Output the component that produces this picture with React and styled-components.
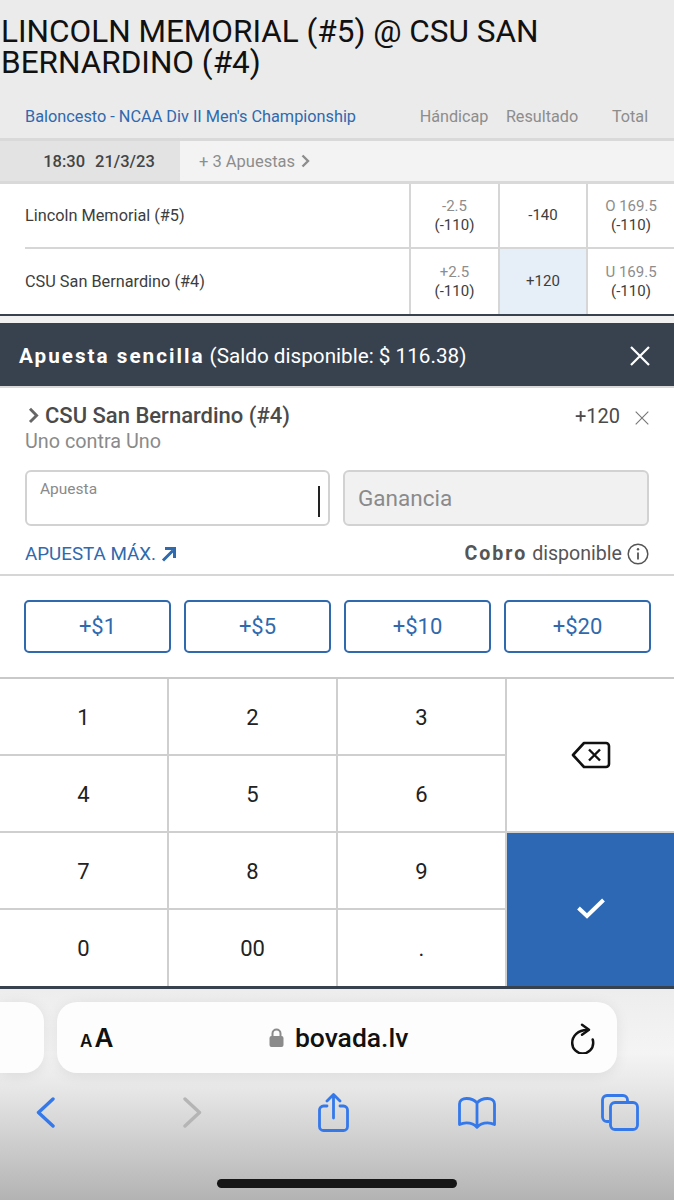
import React from "react";
import styled, { createGlobalStyle } from "styled-components";

const GlobalStyle = createGlobalStyle`
  html, body {
    margin: 0;
    padding: 0;
    background: #ebebeb;
  }
  * { box-sizing: border-box; }
`;

const Page = styled.div`
  width: 674px;
  height: 1200px;
  overflow: hidden;
  display: flex;
  flex-direction: column;
  font-family: Roboto, "Liberation Sans", sans-serif;
  background: #ebebeb;
`;

const GameHeader = styled.header`
  height: 138px;
  padding-top: 16px;
  display: flex;
  flex-direction: column;
  background: #ebebeb;
`;

const Title = styled.h1`
  margin: 0;
  padding-left: 1px;
  width: 600px;
  font-size: 31.5px;
  line-height: 31px;
  font-weight: 400;
  color: #111;
`;

const ColumnRow = styled.div`
  margin-top: 26px;
  height: 24px;
  display: grid;
  grid-template-columns: 410px 88px 88px 88px;
  align-items: center;
`;

const League = styled.span`
  padding-left: 25px;
  font-size: 16.3px;
  color: #2f69ae;
`;

const ColumnLabel = styled.span`
  text-align: center;
  font-size: 16.2px;
  color: #8d8d8d;
`;

const TimeRow = styled.div`
  height: 46px;
  display: flex;
  background: #f3f3f3;
  border-top: 3px solid #d9d9d9;
  border-bottom: 3px solid #d9d9d9;
`;

const TimeCell = styled.div`
  width: 180px;
  background: #e3e3e3;
  display: flex;
  align-items: center;
  justify-content: center;
  padding-left: 18px;
  gap: 10px;
  font-size: 16.5px;
  font-weight: 500;
  color: #444;
`;

const MoreBets = styled.div`
  padding-left: 19px;
  display: flex;
  align-items: center;
  gap: 5px;
  font-size: 16.5px;
  color: #8d8d8d;
`;

const Market = styled.div`
  background: #fff;
  border-bottom: 2px solid #38424f;
`;

const MarketRow = styled.div`
  height: 65px;
  display: grid;
  grid-template-columns: 409px 89px 88px 88px;
`;

const TeamName = styled.div`
  margin-left: 25px;
  display: flex;
  align-items: center;
  font-size: 16.3px;
  color: #3d3d3d;
  border-bottom: ${(p) => (p.$divider ? "2px solid #d6d6d6" : "none")};
`;

const OddsCell = styled.div`
  display: flex;
  flex-direction: column;
  align-items: center;
  justify-content: center;
  border-left: 2px solid #d6d6d6;
  border-bottom: ${(p) => (p.$divider ? "2px solid #d6d6d6" : "none")};
  background: ${(p) => (p.$selected ? "#e6eef7" : "#fff")};
  font-size: 15px;
  line-height: 19px;
  color: #3d3d3d;
`;

const OddsLabel = styled.span`
  color: #8d8d8d;
`;

const Gap = styled.div`
  height: 7px;
  background: #f1f1f1;
`;

const SheetBar = styled.div`
  height: 65px;
  padding: 3px 24px 0 19px;
  display: flex;
  align-items: center;
  justify-content: space-between;
  background: #38424f;
  border-bottom: 2px solid #d9d9d9;
  color: #fff;
  font-size: 20.7px;
`;

const SheetTitle = styled.strong`
  font-weight: 700;
  letter-spacing: 2px;
`;

const Slip = styled.section`
  height: 188px;
  padding: 15px 25px 0;
  background: #fff;
  border-bottom: 2px solid #d6d6d6;
`;

const SlipTop = styled.div`
  display: flex;
  align-items: center;
  justify-content: space-between;
  height: 25px;
`;

const Selection = styled.div`
  display: flex;
  align-items: center;
  gap: 6px;
  padding-left: 2px;
  font-size: 22px;
  font-weight: 500;
  color: #4a4a4a;
`;

const SlipOdds = styled.div`
  display: flex;
  align-items: center;
  gap: 15px;
  font-size: 20px;
  color: #4a4a4a;
  svg {
    margin-top: 4px;
  }
`;

const BetType = styled.div`
  margin-top: 3px;
  font-size: 19.8px;
  line-height: 22px;
  color: #8a8a8a;
`;

const Inputs = styled.div`
  margin-top: 17px;
  display: grid;
  grid-template-columns: 305px 306px;
  column-gap: 13px;
`;

const StakeBox = styled.div`
  position: relative;
  height: 56px;
  padding: 8px 13px;
  border: 2px solid #d2d2d2;
  border-radius: 6px;
  background: ${(p) => (p.$disabled ? "#f1f1f1" : "#fff")};
  display: flex;
  align-items: ${(p) => (p.$disabled ? "center" : "flex-start")};
  font-size: ${(p) => (p.$disabled ? "22.5px" : "15.5px")};
  color: #8a8a8a;
`;

const Caret = styled.span`
  position: absolute;
  right: 8px;
  top: 14px;
  width: 2px;
  height: 31px;
  background: #222;
`;

const MaxRow = styled.div`
  margin-top: 16px;
  display: flex;
  align-items: center;
  justify-content: space-between;
`;

const MaxLink = styled.a`
  display: flex;
  align-items: center;
  gap: 5px;
  font-size: 18.8px;
  color: #2f69ae;
`;

const Payout = styled.div`
  display: flex;
  align-items: center;
  gap: 5px;
  font-size: 19.6px;
  color: #555;
  strong {
    font-weight: 700;
    letter-spacing: 2px;
  }
`;

const Chips = styled.div`
  height: 103px;
  padding: 24px 24px 0;
  display: grid;
  grid-template-columns: repeat(4, 147px);
  column-gap: 13px;
  background: #fff;
  border-bottom: 2px solid #c9c9c9;
`;

const Chip = styled.button`
  height: 53px;
  padding: 0;
  border: 2px solid #2f69ae;
  border-radius: 5px;
  background: #fff;
  color: #2f69ae;
  font-family: inherit;
  font-size: 22px;
`;

const Keypad = styled.div`
  height: 307px;
  display: grid;
  grid-template-columns: 169px 169px 169px 167px;
  grid-template-rows: 77px 77px 77px 76px;
  background: #fff;
`;

const Key = styled.div`
  display: flex;
  align-items: center;
  justify-content: center;
  padding-top: 1px;
  font-size: 22px;
  color: #222;
  border-right: 2px solid #cfcfcf;
  border-bottom: ${(p) => (p.$last ? "none" : "2px solid #cfcfcf")};
`;

const ActionKey = styled.div`
  grid-column: 4;
  grid-row: span 2;
  display: flex;
  align-items: center;
  justify-content: center;
  padding-bottom: ${(p) => (p.$confirm ? "3px" : "0")};
  background: ${(p) => (p.$confirm ? "#2c68b3" : "#fff")};
  border-bottom: ${(p) => (p.$confirm ? "none" : "2px solid #cfcfcf")};
`;

const Browser = styled.div`
  flex: 1;
  position: relative;
  border-top: 3px solid #38424f;
  background: linear-gradient(#ededed 0%, #f4f4f4 30%, #e8e8e8 46%, #b3b3b3 100%);
`;

const TabRow = styled.div`
  padding-top: 13px;
  display: flex;
  gap: 13px;
`;

const PrevTab = styled.div`
  width: 44px;
  height: 71px;
  border-radius: 0 20px 20px 0;
  background: #fdfdfd;
  box-shadow: 0 2px 14px rgba(0, 0, 0, 0.08);
`;

const AddressBar = styled.div`
  width: 560px;
  height: 71px;
  padding: 0 21px 0 23px;
  display: flex;
  align-items: center;
  justify-content: space-between;
  border-radius: 20px;
  background: #fdfdfd;
  box-shadow: 0 2px 14px rgba(0, 0, 0, 0.08);
`;

const TextSize = styled.span`
  display: flex;
  align-items: baseline;
  gap: 2px;
  font-family: Inter, sans-serif;
  font-weight: 600;
  font-size: 26px;
  color: #111;
  small {
    font-size: 17px;
  }
`;

const Domain = styled.span`
  display: flex;
  align-items: center;
  gap: 11px;
  margin-left: -6px;
  font-size: 26.5px;
  font-weight: 500;
  color: #111;
`;

const Toolbar = styled.nav`
  margin-top: 20px;
  padding-left: 36px;
  display: grid;
  grid-template-columns: 147px 135px 140px 143px 38px;
  align-items: center;
`;

const HomeBar = styled.div`
  position: absolute;
  left: 217px;
  bottom: 12px;
  width: 240px;
  height: 9px;
  border-radius: 5px;
  background: #161616;
`;

const Chevron = ({ size = 12, color = "#666", width = 2.4 }) => (
  <svg width={size} height={size * 1.4} viewBox="0 0 10 14" fill="none">
    <path d="M2.5 1.5 8 7l-5.5 5.5" stroke={color} strokeWidth={width} />
  </svg>
);

const Cross = ({ size, color, width }) => (
  <svg width={size} height={size} viewBox="0 0 20 20" fill="none">
    <path d="M1 1l18 18M19 1 1 19" stroke={color} strokeWidth={width} />
  </svg>
);

const odds = [
  { name: "Lincoln Memorial (#5)", spread: "-2.5", line: "-140", total: "O 169.5", spreadOdds: "(-110)" },
  { name: "CSU San Bernardino (#4)", spread: "+2.5", line: "+120", total: "U 169.5", spreadOdds: "(-110)", selected: true },
];

const keys = ["1", "2", "3", "4", "5", "6", "7", "8", "9", "0", "00", "."];

export default function App() {
  return (
    <Page>
      <GlobalStyle />
      <GameHeader>
        <Title>LINCOLN MEMORIAL (#5) @ CSU SAN BERNARDINO (#4)</Title>
        <ColumnRow>
          <League>Baloncesto - NCAA Div II Men's Championship</League>
          <ColumnLabel>Hándicap</ColumnLabel>
          <ColumnLabel>Resultado</ColumnLabel>
          <ColumnLabel>Total</ColumnLabel>
        </ColumnRow>
      </GameHeader>
      <TimeRow>
        <TimeCell>
          <span>18:30</span>
          <span>21/3/23</span>
        </TimeCell>
        <MoreBets>
          + 3 Apuestas <Chevron size={10} color="#8d8d8d" width={2.4} />
        </MoreBets>
      </TimeRow>
      <Market>
        {odds.map((row, i) => (
          <MarketRow key={row.name}>
            <TeamName $divider={i === 0}>{row.name}</TeamName>
            <OddsCell $divider={i === 0}>
              <OddsLabel>{row.spread}</OddsLabel>
              <span>{row.spreadOdds}</span>
            </OddsCell>
            <OddsCell $divider={i === 0} $selected={row.selected}>
              {row.line}
            </OddsCell>
            <OddsCell $divider={i === 0}>
              <OddsLabel>{row.total}</OddsLabel>
              <span>(-110)</span>
            </OddsCell>
          </MarketRow>
        ))}
      </Market>
      <Gap />
      <SheetBar>
        <span>
          <SheetTitle>Apuesta sencilla</SheetTitle> (Saldo disponible: $ 116.38)
        </span>
        <Cross size={20} color="#fff" width={2.2} />
      </SheetBar>
      <Slip>
        <SlipTop>
          <Selection>
            <Chevron size={12} color="#666" width={2.4} />
            CSU San Bernardino (#4)
          </Selection>
          <SlipOdds>
            +120
            <Cross size={14} color="#777" width={1.6} />
          </SlipOdds>
        </SlipTop>
        <BetType>Uno contra Uno</BetType>
        <Inputs>
          <StakeBox>
            Apuesta
            <Caret />
          </StakeBox>
          <StakeBox $disabled>Ganancia</StakeBox>
        </Inputs>
        <MaxRow>
          <MaxLink>
            APUESTA MÁX.
            <svg width="16" height="16" viewBox="0 0 16 16" fill="none">
              <path d="M2 14.5 12 4.5M4 2.5h9.5V12" stroke="#2f69ae" strokeWidth="3" />
            </svg>
          </MaxLink>
          <Payout>
            <span>
              <strong>Cobro</strong> disponible
            </span>
            <svg width="22" height="22" viewBox="0 0 22 22" fill="none">
              <circle cx="11" cy="11" r="9.8" stroke="#555" strokeWidth="1.5" />
              <path d="M11 9.5v7" stroke="#555" strokeWidth="1.8" />
              <circle cx="11" cy="6.3" r="1.2" fill="#555" />
            </svg>
          </Payout>
        </MaxRow>
      </Slip>
      <Chips>
        {["+$1", "+$5", "+$10", "+$20"].map((amount) => (
          <Chip key={amount}>{amount}</Chip>
        ))}
      </Chips>
      <Keypad>
        {keys.slice(0, 3).map((k) => (
          <Key key={k}>{k}</Key>
        ))}
        <ActionKey>
          <svg width="40" height="28" viewBox="0 0 40 28" fill="none">
            <path
              d="M13 2h22a3 3 0 0 1 3 3v18a3 3 0 0 1-3 3H13L2 14 13 2Z"
              stroke="#111"
              strokeWidth="2.6"
              strokeLinejoin="round"
            />
            <path d="M18 8.5 29 19.5M29 8.5 18 19.5" stroke="#111" strokeWidth="2.4" />
          </svg>
        </ActionKey>
        {keys.slice(3, 6).map((k) => (
          <Key key={k}>{k}</Key>
        ))}
        {keys.slice(6, 9).map((k) => (
          <Key key={k}>{k}</Key>
        ))}
        <ActionKey $confirm>
          <svg width="30" height="22" viewBox="0 0 30 22" fill="none">
            <path d="M2.5 11 11 19 27.5 3" stroke="#fff" strokeWidth="4" />
          </svg>
        </ActionKey>
        {keys.slice(9).map((k) => (
          <Key key={k} $last>
            {k}
          </Key>
        ))}
      </Keypad>
      <Browser>
        <TabRow>
          <PrevTab />
          <AddressBar>
            <TextSize>
              <small>A</small>A
            </TextSize>
            <Domain>
              <svg width="15" height="19" viewBox="0 0 15 19" fill="none">
                <path d="M3.5 9V5.5a4 4 0 0 1 8 0V9" stroke="#8b8b8b" strokeWidth="2" />
                <rect x="0.5" y="8" width="14" height="11" rx="2" fill="#8b8b8b" />
              </svg>
              bovada.lv
            </Domain>
            <svg width="26" height="32" viewBox="0 0 26 32" fill="none">
              <path
                d="M17 8C8 8 2.2 14 2.2 21a10.5 10.5 0 0 0 21 0q0-2-.5-3.5"
                stroke="#111"
                strokeWidth="2.5"
                strokeLinecap="round"
              />
              <path d="M12 2.7 19 7.7l-7 5" stroke="#111" strokeWidth="2.5" strokeLinecap="round" strokeLinejoin="round" />
            </svg>
          </AddressBar>
        </TabRow>
        <Toolbar>
          <svg width="19" height="31" viewBox="0 0 19 31" fill="none">
            <path d="M17 2 2.5 15.5 17 29" stroke="#3478ea" strokeWidth="3.4" strokeLinecap="round" strokeLinejoin="round" />
          </svg>
          <svg width="19" height="31" viewBox="0 0 19 31" fill="none">
            <path d="M2 2l14.5 13.5L2 29" stroke="#b5b5b5" strokeWidth="3.4" strokeLinecap="round" strokeLinejoin="round" />
          </svg>
          <svg width="31" height="39" viewBox="0 0 31 39" fill="none">
            <path
              d="M9 13H5.500a4 4 0 0 0-4 4v16.500a4 4 0 0 0 4 4h20a4 4 0 0 0 4-4V17a4 4 0 0 0-4-4H22"
              stroke="#3478ea"
              strokeWidth="2.8"
              strokeLinecap="round"
            />
            <path d="M15.500 25V2M9 8l6.500-6.500L22 8" stroke="#3478ea" strokeWidth="2.8" strokeLinecap="round" strokeLinejoin="round" />
          </svg>
          <svg width="38" height="32" viewBox="0 0 38 32" fill="none">
            <path
              d="M19 6C16.500 3 13 1.500 8.500 1.500 4.500 1.500 1.500 3.500 1.500 7v20.500c2-1 4.500-1.700 7-1.700 4.500 0 8 1.500 10.500 4.500 2.500-3 6-4.500 10.500-4.500 2.500 0 5 .7 7 1.700V7c0-3.500-3-5.500-7-5.500C25 1.500 21.500 3 19 6Zm0 0v24"
              stroke="#3478ea"
              strokeWidth="2.8"
              strokeLinejoin="round"
            />
          </svg>
          <svg width="38" height="37" viewBox="0 0 38 37" fill="none">
            <path d="M8 27.500H6a4.500 4.500 0 0 1-4.500-4.500V6A4.500 4.500 0 0 1 6 1.500h16A4.500 4.500 0 0 1 26.500 6v2" stroke="#3478ea" strokeWidth="2.8" />
            <rect x="9.500" y="8.500" width="27" height="27" rx="4.500" stroke="#3478ea" strokeWidth="2.8" />
          </svg>
        </Toolbar>
        <HomeBar />
      </Browser>
    </Page>
  );
}
